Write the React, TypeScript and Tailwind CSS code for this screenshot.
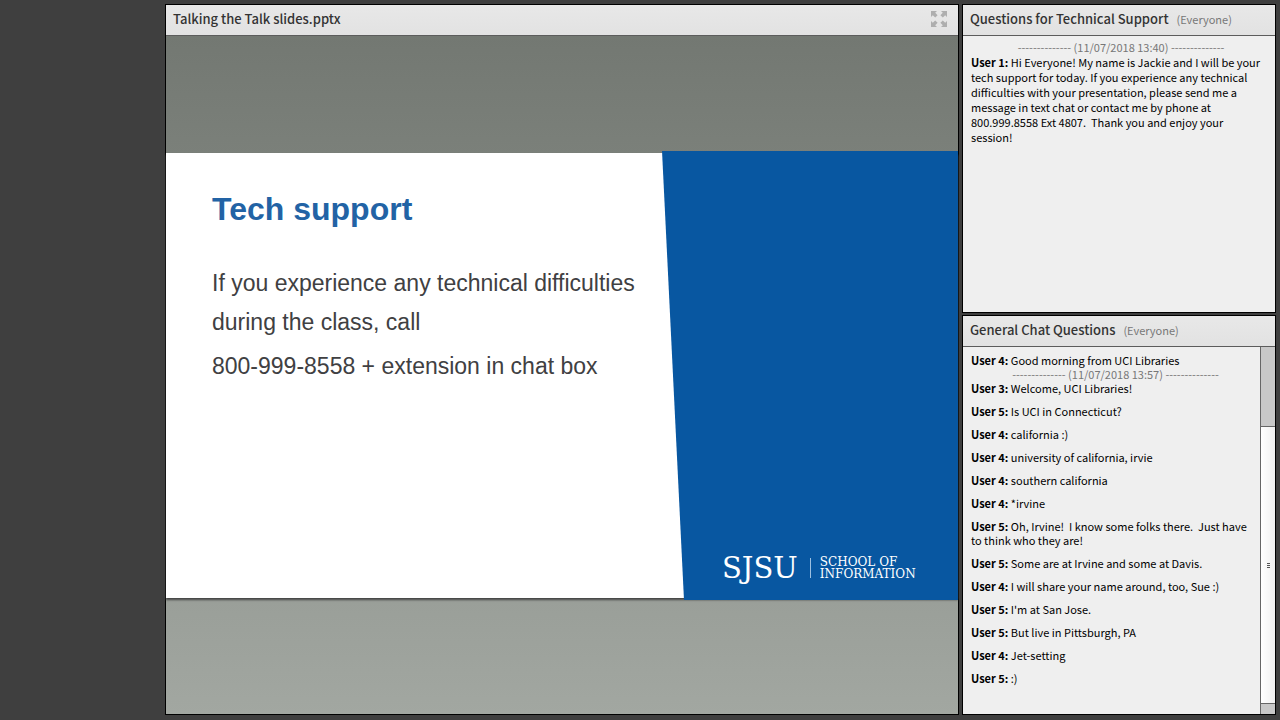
import { clsx } from "clsx";
import type React from "react";

interface ChatEntry {
	user?: string;
	text: string;
}

const supportChat: ChatEntry[] = [
	{ text: "-------------- (11/07/2018 13:40) --------------" },
	{
		user: "User 1",
		text: "Hi Everyone! My name is Jackie and I will be your tech support for today. If you experience any technical difficulties with your presentation, please send me a message in text chat or contact me by phone at 800.999.8558 Ext 4807.  Thank you and enjoy your session!",
	},
];

const generalChat: ChatEntry[] = [
	{ user: "User 4", text: "Good morning from UCI Libraries" },
	{ text: "-------------- (11/07/2018 13:57) --------------" },
	{ user: "User 3", text: "Welcome, UCI Libraries!" },
	{ user: "User 5", text: "Is UCI in Connecticut?" },
	{ user: "User 4", text: "california :)" },
	{ user: "User 4", text: "university of california, irvie" },
	{ user: "User 4", text: "southern california" },
	{ user: "User 4", text: "*irvine" },
	{
		user: "User 5",
		text: "Oh, Irvine!  I know some folks there.  Just have to think who they are!",
	},
	{ user: "User 5", text: "Some are at Irvine and some at Davis." },
	{ user: "User 4", text: "I will share your name around, too, Sue :)" },
	{ user: "User 5", text: "I'm at San Jose." },
	{ user: "User 5", text: "But live in Pittsburgh, PA" },
	{ user: "User 4", text: "Jet-setting" },
	{ user: "User 5", text: ":)" },
];

interface PodProps {
	title: string;
	audience?: string;
	action?: React.ReactNode;
	className?: string;
	children: React.ReactNode;
}

function Pod({ title, audience, action, className, children }: PodProps) {
	return (
		<section
			className={clsx(
				"flex min-h-0 flex-col border border-black bg-[#efefef]",
				className,
			)}
		>
			<header className="flex h-[31px] flex-none items-center border-b border-[#5c5c5c] bg-linear-to-b from-[#e8e8e8] to-[#e2e2e2] pr-[10px] pb-[2px] pl-[7px] leading-5">
				<h2 className="text-[13px] font-medium text-[#333]">{title}</h2>
				{audience && (
					<span className="ml-2 text-[11px] text-[#777]">({audience})</span>
				)}
				{action}
			</header>
			{children}
		</section>
	);
}

function ChatLog({
	entries,
	className,
}: { entries: ChatEntry[]; className?: string }) {
	return (
		<div
			className={clsx("min-w-0 flex-1 overflow-hidden text-[11px]", className)}
		>
			{entries.map((entry, index) =>
				entry.user ? (
					<p
						key={index}
						className={clsx(
							"pr-[6px] whitespace-pre-wrap text-black",
							entries[index + 1]?.user && "mb-[9px]",
						)}
					>
						<b className="font-bold">{entry.user}:</b> {entry.text}
					</p>
				) : (
					<p key={index} className="text-center text-[#777]">
						{entry.text}
					</p>
				),
			)}
		</div>
	);
}

function ScrollBar() {
	return (
		<div className="flex w-[15px] flex-none flex-col border-l border-[#666] bg-[#c8c8c8]">
			<div className="h-[79px] flex-none" />
			<div className="flex flex-1 flex-col items-center justify-center gap-px border-y border-[#666] bg-linear-to-r from-white to-[#f0f0f0]">
				<span className="h-px w-[3px] bg-[#555]" />
				<span className="h-px w-[3px] bg-[#555]" />
				<span className="h-px w-[3px] bg-[#555]" />
			</div>
			<div className="h-[10px] flex-none" />
		</div>
	);
}

function FullScreenIcon() {
	return (
		<svg viewBox="0 0 18 18" className="size-[18px]" fill="#aeaeae">
			<path d="M1 1h6L5.2 2.8 7.6 5.2 5.2 7.6 2.8 5.2 1 7z" />
			<path d="M17 1v6l-1.8-1.8-2.4 2.4-2.4-2.4 2.4-2.4L11 1z" />
			<path d="M1 17v-6l1.8 1.8 2.4-2.4 2.4 2.4-2.4 2.4L7 17z" />
			<path d="M17 17h-6l1.8-1.8-2.4-2.4 2.4-2.4 2.4 2.4L17 11z" />
		</svg>
	);
}

function Slide() {
	return (
		<article className="flex aspect-video w-full bg-white font-['Liberation_Sans',Arial,sans-serif] text-[#404042] shadow-[0_2px_2px_#444]">
			<div className="min-w-0 flex-1 pt-9 pl-[46px]">
				<h1 className="text-[32px] leading-10 font-bold text-[#2263a5]">
					Tech support
				</h1>
				<div className="mt-[35px] text-[23px] leading-[39px] whitespace-nowrap">
					<p>
						If you experience any technical difficulties
						<br />
						during the class, call
					</p>
					<p className="mt-[5px]">800-999-8558 + extension in chat box</p>
				</div>
			</div>
			<div className="-my-[2px] flex w-[296px] flex-none items-end bg-[#0857a1] pb-[18px] pl-[60px] font-['DejaVu_Serif',serif] text-white [clip-path:polygon(0_0,100%_0,100%_100%,22px_100%)]">
				<div className="flex items-center">
					<span className="text-[29px] leading-7">SJSU</span>
					<span className="mr-[9px] ml-3 h-5 w-px bg-[#9dc0e0]" />
					<span className="text-xs leading-3">
						SCHOOL OF
						<br />
						INFORMATION
					</span>
				</div>
			</div>
		</article>
	);
}

export default function App() {
	return (
		<main className="flex h-screen gap-[3px] bg-[#3f3f3f] pt-1 pr-1 pb-[5px] pl-[165px] font-['Noto_Sans_CJK_SC',sans-serif]">
			<Pod
				title="Talking the Talk slides.pptx"
				className="min-w-0 flex-1"
				action={
					<button type="button" aria-label="Full screen" className="ml-auto">
						<FullScreenIcon />
					</button>
				}
			>
				<div className="flex min-h-0 flex-1 items-center bg-linear-to-b from-[#737872] to-[#a2a7a1] pt-px">
					<Slide />
				</div>
			</Pod>
			<div className="flex w-[314px] flex-none flex-col gap-[2px]">
				<Pod
					title="Questions for Technical Support"
					audience="Everyone"
					className="h-[309px] flex-none"
				>
					<ChatLog
						entries={supportChat}
						className="pt-1 pr-1 pl-2 leading-[15px]"
					/>
				</Pod>
				<Pod
					title="General Chat Questions"
					audience="Everyone"
					className="flex-1"
				>
					<div className="flex min-h-0 flex-1">
						<ChatLog
							entries={generalChat}
							className="pt-[6px] pl-2 leading-[14px]"
						/>
						<ScrollBar />
					</div>
				</Pod>
			</div>
		</main>
	);
}
